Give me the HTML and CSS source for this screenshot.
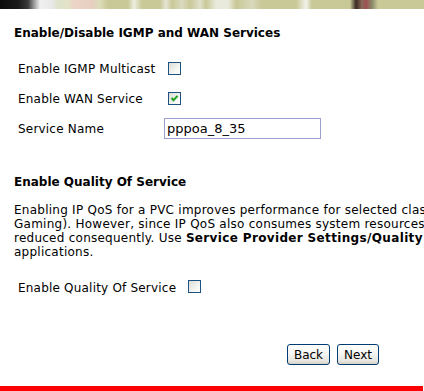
FILE: index.html
```html
<!DOCTYPE html>
<html>
<head>
<meta charset="utf-8">
<link rel="stylesheet" href="styles.css">
</head>
<body>
<div class="banner"></div>
<div class="content">
  <div class="title">Enable/Disable IGMP and WAN Services</div>
  <div class="form-grid">
    <div class="label">Enable IGMP Multicast</div>
    <div class="value"><span class="cb"></span></div>
    <div class="label">Enable WAN Service</div>
    <div class="value"><span class="cb"><svg width="11" height="11" viewBox="0 0 11 11"><path d="M2.5 5 L4.5 7.2 L8.5 2.8" fill="none" stroke="#21a121" stroke-width="2"/></svg></span></div>
    <div class="label">Service Name</div>
    <div class="value"><input class="text" type="text" value="pppoa_8_35"></div>
  </div>
  <div class="title t2">Enable Quality Of Service</div>
  <p class="desc">Enabling IP QoS for a PVC improves performance for selected classes of applications (such as VoIP, Online<br>Gaming). However, since IP QoS also consumes system resources, the number of connections will be<br>reduced consequently. Use <b class="em">Service Provider Settings/Quality of Service</b> to assign priorities for the<br>applications.</p>
  <div class="qos-row">
    <div class="label">Enable Quality Of Service</div>
    <div class="value"><span class="cb"></span></div>
  </div>
  <div class="buttons">
    <button class="btn back">Back</button>
    <button class="btn next">Next</button>
  </div>
</div>
<div class="redbar"></div>
</body>
</html>
```
FILE: styles.css
```css
html, body {
  margin: 0;
  padding: 0;
  background: #fff;
  overflow: hidden;
  width: 424px;
  height: 391px;
}
body {
  font-family: "DejaVu Sans", Verdana, sans-serif;
  color: #000;
}
.banner {
  height: 9px;
  width: 424px;
  background: linear-gradient(to right,
    #0c0c0c 0, #1a1a1a 18px, #3a3a3a 28px, #9a9a9a 34px, #f0f0f0 40px,
    #e8e8e8 52px, #dfe3cc 58px, #e2e2c8 68px, #ecd4c6 74px, #e6cfc0 92px,
    #dcdcb8 100px, #c9c897 108px, #c9c897 128px, #eeeee0 134px, #c9c897 142px,
    #c9c897 160px, #e5e5d5 166px, #c9c897 172px, #dadac0 182px, #c9c897 190px,
    #e0e0cc 200px, #c9c897 206px, #eaeadc 216px, #eaeadc 228px, #c9c897 236px,
    #d8d8bc 252px, #c9c897 262px, #c9c897 296px, #f2f2ea 306px, #c9c897 312px,
    #c9c897 350px, #3a2a20 356px, #8c6a5a 362px, #a05050 366px, #8a8a6a 372px,
    #c9c897 378px, #c9c897 424px);
}
.content {
  padding-left: 14px;
}
.title {
  font-weight: bold;
  font-size: 12px;
  line-height: 14px;
  margin-top: 17px;
  white-space: nowrap;
}
.title.t2 {
  margin-top: 30px;
}
.form-grid {
  display: grid;
  grid-template-columns: 146px auto;
  grid-auto-rows: 30px;
  padding-left: 4px;
  margin-top: 15px;
}
.label {
  font-size: 12px;
  line-height: 14px;
  letter-spacing: 0.2px;
  padding-top: 7px;
  white-space: nowrap;
}
.value {
  padding-top: 7px;
}
.cb {
  display: block;
  box-sizing: border-box;
  width: 13px;
  height: 13px;
  margin-left: 4px;
  border: 1px solid #1c5180;
  background: linear-gradient(135deg, #dcdcd7 0%, #f4f4f0 60%, #ffffff 100%);
}
.cb svg {
  display: block;
}
.form-grid .value:last-child {
  padding-top: 3px;
}
.text {
  box-sizing: border-box;
  width: 157px;
  height: 21px;
  border: 1px solid #9a9fd0;
  padding: 0 2px;
  margin: 0;
  font-family: "DejaVu Sans", Verdana, sans-serif;
  font-size: 13px;
  color: #000;
  outline: none;
}
.desc {
  margin: 14px 0 0 0;
  font-size: 12px;
  line-height: 14px;
  letter-spacing: 0.25px;
  white-space: nowrap;
}
.desc .em {
  letter-spacing: 0.35px;
}
.qos-row {
  display: grid;
  grid-template-columns: 166px auto;
  padding-left: 4px;
  margin-top: 21px;
  height: 13px;
}
.qos-row .label {
  padding-top: 1px;
}
.qos-row .value {
  padding-top: 0;
}
.buttons {
  display: flex;
  gap: 7px;
  padding-left: 273px;
  margin-top: 51px;
}
.btn {
  box-sizing: border-box;
  height: 21px;
  padding: 0;
  border: 1px solid #003c74;
  border-radius: 3px;
  background: linear-gradient(to bottom, #ffffff 0%, #f4f4f0 50%, #e6e5de 85%, #d6d0c5 100%);
  font-family: "DejaVu Sans", Verdana, sans-serif;
  font-size: 12px;
  color: #000;
}
.btn.back { width: 43px; }
.btn.next { width: 42px; }
.redbar {
  width: 423px;
  height: 5px;
  background: #ff0000;
  margin-top: 21px;
}
```
